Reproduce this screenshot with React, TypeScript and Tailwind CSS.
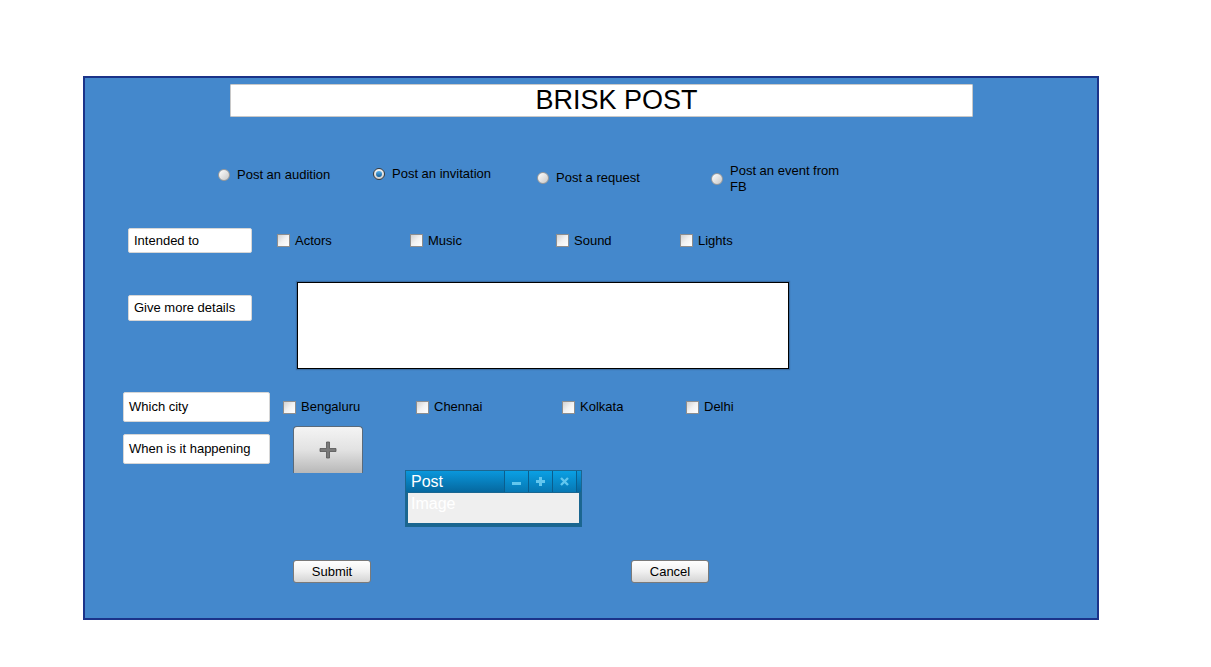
import type { ReactNode } from "react";

const font = { fontFamily: '"Liberation Sans", Arial, sans-serif' };

function Radio({ checked = false }: { checked?: boolean }) {
    return checked ? (
        <span className="inline-flex h-[12px] w-[12px] shrink-0 items-center justify-center rounded-full border border-[#3a3a3a] bg-gradient-to-b from-[#f4f4f4] to-[#cfcfcf]">
            <span className="h-[6px] w-[6px] rounded-full bg-gradient-to-b from-[#5ab4ee] to-[#0a5c9a]" />
        </span>
    ) : (
        <span className="inline-block h-[12px] w-[12px] shrink-0 rounded-full border border-[#9a9a9a] bg-gradient-to-br from-[#ffffff] to-[#c8c8c8]" />
    );
}

function Check() {
    return (
        <span className="inline-block h-[13px] w-[13px] shrink-0 border border-[#8e8e8e] bg-gradient-to-br from-[#d2d2d2] via-[#f2f2f2] to-[#ffffff]" />
    );
}

function CheckItem({ label, w }: { label: string; w: string }) {
    return (
        <div className={`flex items-center gap-[5px] text-[13px] text-black ${w}`}>
            <Check />
            <span>{label}</span>
        </div>
    );
}

function Label({ children, className }: { children: ReactNode; className: string }) {
    return (
        <div className={`flex items-center rounded-[2px] border border-[#d6d6d6] bg-white pl-[5px] text-[13px] text-black ${className}`}>
            {children}
        </div>
    );
}

function Btn({ children }: { children: ReactNode }) {
    return (
        <button
            type="button"
            className="h-[23px] w-[78px] rounded-[3px] border border-[#7a7a7a] bg-gradient-to-b from-[#ffffff] via-[#f0f0f0] to-[#d4d4d4] text-[13px] text-black"
        >
            {children}
        </button>
    );
}

function PostWindow() {
    return (
        <div className="ml-[42px] mt-[44px] flex h-[57px] w-[177px] flex-col border border-[#1c6690] bg-[#1a6690]">
            <div className="flex h-[21px] items-center bg-gradient-to-b from-[#0a97dc] to-[#06689f] pl-[5px]">
                <span className="flex-1 text-[16px] leading-none text-white">Post</span>
                <div className="flex h-full">
                    {["min", "max", "close"].map((k) => (
                        <span
                            key={k}
                            className="flex h-full w-[24px] items-center justify-center border-l border-[#0a5e8e] bg-gradient-to-b from-[#0aa0e4] to-[#0778b4]"
                        >
                            <svg width="11" height="11" viewBox="0 0 11 11">
                                {k === "min" && <rect x="1" y="6" width="9" height="3" fill="#62c6ee" />}
                                {k === "max" && <path d="M4 1h3v3h3v3H7v3H4V7H1V4h3z" fill="#62c6ee" />}
                                {k === "close" && (
                                    <path d="M2 2l7 7M9 2l-7 7" stroke="#62c6ee" strokeWidth="2.4" />
                                )}
                            </svg>
                        </span>
                    ))}
                    <span className="w-[5px] border-l border-[#0a5e8e]" />
                </div>
            </div>
            <div className="mx-[2px] mb-[3px] mt-[1px] flex-1 pt-[1px] bg-[#efefef] pl-[3px] text-[16px] leading-[20px] text-white">
                Image
            </div>
        </div>
    );
}

export default function App() {
    return (
        <div className="min-h-[667px] w-[1211px] bg-white pt-[76px]" style={font}>
            <div className="ml-[83px] flex h-[544px] w-[1016px] flex-col border-2 border-[#1b3389] bg-[#4488cc]">

                {/* TITLE */}
                <div className="ml-[145px] mt-[6px] flex h-[33px] w-[743px] items-center justify-center rounded-[1px] border border-[#c8c8c8] bg-white pl-[30px] text-[27px] text-black">
                    BRISK POST
                </div>

                {/* POST TYPE */}
                <div className="ml-[133px] mt-[46px] flex items-start text-[13px] leading-[16px] text-black">
                    <div className="mt-[4px] flex w-[155px] items-center gap-[7px]">
                        <Radio />
                        <span>Post an audition</span>
                    </div>
                    <div className="mt-[3px] flex w-[164px] items-center gap-[7px]">
                        <Radio checked />
                        <span>Post an invitation</span>
                    </div>
                    <div className="mt-[7px] flex w-[174px] items-center gap-[7px]">
                        <Radio />
                        <span>Post a request</span>
                    </div>
                    <div className="flex items-center gap-[7px]">
                        <Radio />
                        <span className="w-[120px]">Post an event from FB</span>
                    </div>
                </div>

                {/* INTENDED */}
                <div className="ml-[43px] mt-[33px] flex items-center">
                    <Label className="h-[25px] w-[124px]">Intended to</Label>
                    <div className="ml-[25px] flex items-center">
                        <CheckItem label="Actors" w="w-[133px]" />
                        <CheckItem label="Music" w="w-[146px]" />
                        <CheckItem label="Sound" w="w-[124px]" />
                        <CheckItem label="Lights" w="" />
                    </div>
                </div>

                {/* DETAILS */}
                <div className="ml-[43px] mt-[29px] flex items-start">
                    <Label className="mt-[13px] h-[26px] w-[124px]">Give more details</Label>
                    <div className="ml-[45px] h-[87px] w-[492px] border border-black bg-white shadow-[0_0_1px_1px_rgba(40,60,90,0.35)]" />
                </div>

                {/* CITY */}
                <div className="ml-[38px] mt-[23px] flex items-center">
                    <Label className="h-[30px] w-[147px]">Which city</Label>
                    <div className="ml-[13px] flex items-center">
                        <CheckItem label="Bengaluru" w="w-[133px]" />
                        <CheckItem label="Chennai" w="w-[146px]" />
                        <CheckItem label="Kolkata" w="w-[124px]" />
                        <CheckItem label="Delhi" w="" />
                    </div>
                </div>

                {/* WHEN */}
                <div className="ml-[38px] mt-[4px] flex items-start">
                    <Label className="mt-[8px] h-[30px] w-[147px]">When is it happening</Label>
                    <button
                        type="button"
                        className="ml-[23px] flex h-[47px] w-[70px] items-center justify-center rounded-t-[4px] border border-b-0 border-[#5a6a7a] bg-gradient-to-b from-[#f4f4f4] via-[#e2e2e2] to-[#b8b8b8]"
                    >
                        <svg width="20" height="20" viewBox="0 0 20 20">
                            <path d="M8.5 2h3v6.5H18v3h-6.5V18h-3v-6.5H2v-3h6.5z" fill="#7a7a7a" stroke="#555" strokeWidth="0.8" />
                        </svg>
                    </button>
                    <PostWindow />
                </div>

                {/* ACTIONS */}
                <div className="ml-[208px] mt-[33px] flex items-start gap-[260px]">
                    <Btn>Submit</Btn>
                    <Btn>Cancel</Btn>
                </div>
            </div>
        </div>
    );
}
